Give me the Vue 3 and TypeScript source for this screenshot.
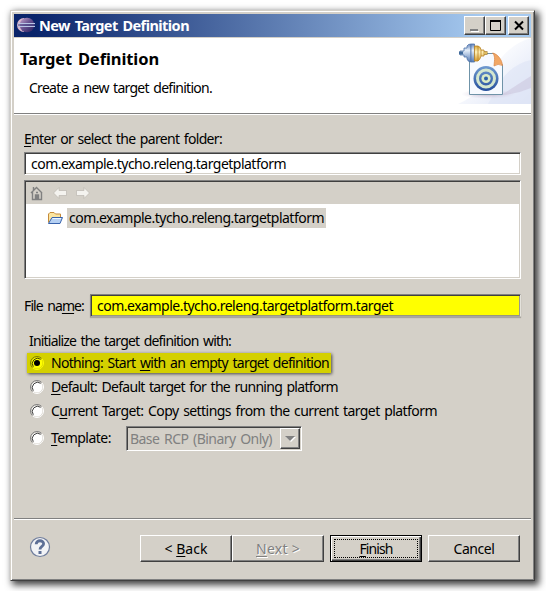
<script setup lang="ts">
import { ref, type Directive } from 'vue'

interface Choice {
  id: string
  before: string
  key: string
  after: string
  width: number
}

// Spreads the letters of a label evenly so that it takes the given width.
const vFit: Directive<HTMLElement, number> = {
  mounted(el, { value }) {
    const count = (el.textContent ?? '').length
    const natural = el.getBoundingClientRect().width
    el.style.letterSpacing = `${(value - natural) / count}px`
  },
}

const selected = ref('nothing')
const folder = 'com.example.tycho.releng.targetplatform'
const fileName = 'com.example.tycho.releng.targetplatform.target'

const choices: Choice[] = [
  { id: 'nothing', before: 'Nothing: Start ', key: 'w', after: 'ith an empty target definition', width: 278 },
  { id: 'default', before: '', key: 'D', after: 'efault: Default target for the running platform', width: 287 },
  { id: 'current', before: 'C', key: 'u', after: 'rrent Target: Copy settings from the current target platform', width: 386 },
  { id: 'template', before: '', key: 'T', after: 'emplate:', width: 60 },
]
</script>

<template>
  <main class="window">
    <header class="titlebar">
      <svg class="logo" width="18" height="16" viewBox="0 0 18 16">
        <defs>
          <linearGradient id="ball" x1="0" y1="0" x2="1" y2="1">
            <stop offset="0" stop-color="#c9a9cf" />
            <stop offset=".45" stop-color="#6b5592" />
            <stop offset="1" stop-color="#241b5c" />
          </linearGradient>
        </defs>
        <path d="M7 1A7 7 0 0 0 7 15" fill="#d9b7cd" />
        <circle cx="10" cy="8" r="7.3" fill="url(#ball)" />
        <path d="M1 6.5H18M1 9.5H18" stroke="#b9c5e5" />
        <path d="M1 8H18" stroke="#4a4c8c" />
      </svg>
      <span class="caption"><span v-fit="150">New Target Definition</span></span>
      <div class="controls">
        <span class="ctl"><svg width="16" height="14"><path d="M4 12.5H12" stroke="#fff" /><path d="M3 11H11" stroke="#808080" stroke-width="2" /></svg></span>
        <span class="ctl"><svg width="16" height="14"><path d="M2.5 1.5H12.5V11.5H2.5Z" fill="none" stroke="#000" /><path d="M2 2H13" stroke="#000" stroke-width="2" /></svg></span>
        <span class="ctl close"><svg width="16" height="14"><path d="M4 2.5L12 10.5M12 2.5L4 10.5" stroke="#000" stroke-width="2" /></svg></span>
      </div>
    </header>

    <section class="banner">
      <div class="words">
        <h1><span v-fit="139">Target Definition</span></h1>
        <p><span v-fit="183">Create a new target definition.</span></p>
      </div>
      <svg class="art" width="75" height="66" viewBox="0 0 75 66">
        <defs>
          <linearGradient id="sky" x1="0" y1="0" x2="1" y2="1">
            <stop offset=".3" stop-color="#fff" />
            <stop offset="1" stop-color="#dce3f6" />
          </linearGradient>
          <linearGradient id="steel" x1="0" y1="0" x2="0" y2="1">
            <stop offset="0" stop-color="#6585bb" />
            <stop offset=".35" stop-color="#e5effa" />
            <stop offset="1" stop-color="#557bb5" />
          </linearGradient>
          <linearGradient id="gold" x1="0" y1="0" x2="0" y2="1">
            <stop offset="0" stop-color="#dda936" />
            <stop offset=".4" stop-color="#fff3bd" />
            <stop offset="1" stop-color="#d79b29" />
          </linearGradient>
          <linearGradient id="rings" x1="0" y1="0" x2="0" y2="1">
            <stop offset="0" stop-color="#6f9ad0" />
            <stop offset="1" stop-color="#254f9c" />
          </linearGradient>
          <radialGradient id="shade">
            <stop offset="0" stop-color="#b6a8bf" stop-opacity=".85" />
            <stop offset="1" stop-color="#d4cbe0" stop-opacity="0" />
          </radialGradient>
        </defs>
        <path d="M75 0V66H2Q25 56 36 34Q50 7 75 0" fill="url(#sky)" />
        <path d="M75 22Q56 26 44 44L32 66H75Z" fill="#dfe5f6" opacity=".65" />
        <path d="M47 56L75 38V50Q61 56 47 57" fill="#c6bdd5" opacity=".45" />
        <ellipse cx="32" cy="56" rx="27" ry="5" fill="url(#shade)" />
        <path d="M13.500 15.500H38L46.500 27V56.500H13.500Z" fill="#f7faff" stroke="#6f93a8" />
        <path d="M36.500 15C40 18 38 25 38 28Q42 25 46.500 27.500C46 22 42 16 36.500 15Z" fill="#f2a765" stroke="#d88443" stroke-width=".7" />
        <circle cx="30" cy="40.500" r="12.500" fill="url(#rings)" />
        <circle cx="30" cy="40.500" r="8.500" fill="none" stroke="#d4e7cf" stroke-width="3" />
        <circle cx="30" cy="40.500" r="4.600" fill="#d9ebc7" />
        <circle cx="30" cy="40.500" r="2" fill="#2d61a9" />
        <path d="M4 13H8V10H11V8Q12 6 15 6V24Q12 24 11 21V19H8V17H4Z" fill="url(#steel)" stroke="#4f73aa" stroke-width=".8" />
        <path d="M15 6H18.500V24H15Z" fill="url(#steel)" stroke="#4f73aa" stroke-width=".8" />
        <path d="M18.500 8H22Q25 9 25 12H28V18H25Q24 22 22 23H18.500Z" fill="url(#gold)" stroke="#b98325" stroke-width=".8" />
        <path d="M22 8V23M25 12V18" stroke="#b98325" stroke-width=".8" />
        <path d="M3 15H7" stroke="#416b9b" stroke-width="3" />
        <path d="M28 15H31.500" stroke="#a67b24" stroke-width="3.500" />
        <path d="M28 15H31" stroke="#f0cf70" stroke-width="1.500" />
      </svg>
    </section>

    <section class="page">
      <label class="parent"><span v-fit="198"><u>E</u>nter or select the parent folder:</span></label>
      <div class="field parent-field"><span v-fit="255">{{ folder }}</span></div>
      <div class="tree">
        <div class="toolbar">
          <svg width="14" height="16" viewBox="0 0 14 16">
            <path d="M1 8L6.500 2.500L12 8M2.500 7V14.500H11.500V7M3.500 5V2M5.500 14V10H8.500V14M6 7.500H8" fill="none" stroke="#808080" stroke-width="1.400" />
            <path d="M7 10V14" stroke="#808080" stroke-width="2" />
          </svg>
          <svg width="14" height="12" viewBox="0 0 14 12"><path d="M.5 6L6 .5V3.500H13.500V8.500H6V11.500Z" fill="#f4f3ef" stroke="#bcb8b0" stroke-width=".7" /></svg>
          <svg width="14" height="12" viewBox="0 0 14 12"><path d="M13.500 6L8 .5V3.500H.5V8.500H8V11.500Z" fill="#f4f3ef" stroke="#bcb8b0" stroke-width=".7" /></svg>
        </div>
        <div class="node">
          <svg width="17" height="14" viewBox="0 0 17 14">
            <path d="M1.500 11.500V3L3 1.500H7L8.500 3H13.500V7" fill="#fbe5a0" stroke="#c58b3b" />
            <path d="M1.500 12.500L5 6.500H15.500L13 12.500Z" fill="#b5d0f3" stroke="#3863ac" />
            <path d="M5.500 7.500H14" stroke="#eff7ff" />
          </svg>
          <span class="picked"><span v-fit="255">{{ folder }}</span></span>
        </div>
      </div>

      <div class="file-row">
        <label><span v-fit="60">File na<u>m</u>e:</span></label>
        <div class="field marked"><span v-fit="296">{{ fileName }}</span></div>
      </div>

      <p class="intro"><span v-fit="202">Initialize the target definition with:</span></p>
      <div class="choices">
        <div
          v-for="choice in choices"
          :key="choice.id"
          class="choice"
          :class="[choice.id, { on: selected === choice.id }]"
          @click="selected = choice.id"
        >
          <svg class="radio" width="14" height="14" viewBox="0 0 14 14">
            <circle class="disc" cx="7" cy="7" r="5.500" />
            <path class="lit" d="M11.600 2.400A6.500 6.500 0 0 1 2.400 11.600" />
            <path class="dim" d="M2.400 11.600A6.500 6.500 0 0 1 11.600 2.400" />
            <path class="dark" d="M3.300 10.700A5.300 5.300 0 0 1 10.700 3.300" />
            <circle v-if="selected === choice.id" cx="7" cy="7" r="3" fill="#000" />
          </svg>
          <span class="choice-text"><span v-fit="choice.width">{{ choice.before }}<u>{{ choice.key }}</u>{{ choice.after }}</span></span>
          <div v-if="choice.id === 'template'" class="combo">
            <span class="combo-text"><span v-fit="142">Base RCP (Binary Only)</span></span>
            <span class="arrow"><svg width="12" height="8"><path d="M2 2H12L7 7Z" fill="#fff" /><path d="M1 1H11L6 6Z" fill="#808080" /></svg></span>
          </div>
        </div>
      </div>
    </section>

    <footer class="footer">
      <svg class="help" width="22" height="22" viewBox="0 0 22 22">
        <circle cx="11" cy="11" r="9.500" fill="#f2f3f6" stroke="#6f7d9c" stroke-width="1.200" />
        <path d="M7.200 8.200C7.200 3.500 14.800 3.700 14.600 8C14.500 10.500 11 10.500 11 13.500" fill="none" stroke="#5d6f96" stroke-width="2.800" />
        <path d="M9.500 15H12.500V18H9.500Z" fill="#5d6f96" />
      </svg>
      <button class="btn"><span v-fit="43">&lt; <u>B</u>ack</span></button>
      <button class="btn off"><span v-fit="44"><u>N</u>ext &gt;</span></button>
      <button class="btn primary"><span class="focus"><span v-fit="33"><u>F</u>inish</span></span></button>
      <button class="btn cancel"><span v-fit="41">Cancel</span></button>
    </footer>
  </main>
</template>

<style>
body {
  margin: 0;
  background: #fff;
}
</style>

<style scoped>
* {
  box-sizing: border-box;
}
.window {
  display: flex;
  flex-direction: column;
  width: 525px;
  height: 571px;
  margin: 10px;
  padding: 3px;
  border: 1px solid #404040;
  border-top-color: #d4d0c8;
  border-left-color: #d4d0c8;
  background: #d4d0c8;
  box-shadow: inset 1px 1px #fff, inset -1px -1px #808080, 3px 3px 7px 1px rgba(0, 0, 0, 0.75);
  font: 14px/20px 'Noto Sans', 'Open Sans', sans-serif;
  word-spacing: 1.5px;
  color: #000;
  white-space: nowrap;
}
svg {
  display: block;
  flex: none;
}
u {
  text-decoration-thickness: 1px;
  text-underline-offset: 2px;
  text-decoration-skip-ink: none;
}
.titlebar {
  display: flex;
  flex: none;
  align-items: center;
  width: 517px;
  height: 23px;
  padding: 0 2px 0 3px;
  background: linear-gradient(90deg, #0a246a 4%, #a6caf0 91%);
}
.logo {
  margin-bottom: 2px;
}
.caption {
  margin: -2px 0 0 4px;
  color: #fff;
  font-size: 14.5px;
  font-weight: 700;
}
.controls {
  display: flex;
  margin-left: auto;
}
.ctl {
  width: 21px;
  height: 19px;
  padding: 2px;
  background: #d4d0c8;
  border: 1px solid #404040;
  border-top-color: #fff;
  border-left-color: #fff;
  box-shadow: inset -1px -1px #808080;
}
.close {
  margin-left: 2px;
}
.banner {
  display: flex;
  flex: none;
  justify-content: space-between;
  width: 517px;
  height: 77px;
  border-top: 1px solid #d4d0c8;
  border-bottom: 1px solid #808080;
  background: #fff;
}
.words {
  padding: 11px 0 0 6px;
}
h1 {
  margin: 0;
  font-size: 16.5px;
  line-height: 20px;
}
p {
  margin: 0;
}
.words p {
  padding: 9px 0 0 9px;
}
.page {
  display: flex;
  flex-direction: column;
  flex: none;
  width: 517px;
  height: 404px;
  padding: 14px 10px 0;
  border-top: 1px solid #fff;
}
.parent {
  height: 23px;
}
.field {
  height: 23px;
  padding: 0 5px;
  border: 1px solid #fff;
  border-top-color: #808080;
  border-left-color: #808080;
  box-shadow: inset 1px 1px #404040, inset -1px -1px #d4d0c8;
  background: #fff;
  line-height: 21px;
}
.parent-field {
  flex: none;
  padding-left: 6px;
}
.tree {
  flex: none;
  height: 99px;
  margin-top: 5px;
  padding: 1px;
  border: 1px solid #fff;
  border-top-color: #808080;
  border-left-color: #808080;
  box-shadow: inset 1px 1px #404040, inset -1px -1px #d4d0c8;
  background: #fff;
}
.toolbar {
  display: flex;
  align-items: center;
  gap: 9px;
  height: 22px;
  padding-left: 4px;
  background: #d4d0c8;
}
.node {
  display: flex;
  align-items: center;
  gap: 3px;
  margin: 4px 0 0 21px;
}
.picked {
  width: 259px;
  height: 20px;
  padding-left: 2px;
  background: #d4d0c8;
}
.file-row {
  display: flex;
  align-items: center;
  flex: none;
  margin-top: 15px;
}
.file-row label {
  width: 66px;
}
.marked {
  flex: 1;
  padding-left: 6px;
  background: #ff0;
  box-shadow: inset 1px 1px #404040, inset -1px 0 #99978f, inset 0 -1px #99977f, 0 1px 1px rgba(0, 0, 0, 0.2);
  border-right-color: #e4e2dc;
  border-bottom-color: #aaa8a0;
}
.intro {
  margin: 14px 0 0 5px;
}
.choices {
  display: flex;
  flex-direction: column;
  margin-left: 3px;
}
.choice {
  display: flex;
  align-items: center;
  align-self: flex-start;
  flex: none;
  height: 20px;
  margin: 2px 0;
  padding-left: 3px;
}
.nothing {
  width: 304px;
}
.on {
  background: #d4d000;
  box-shadow: 1px 1px 3px rgba(0, 0, 0, 0.65);
}
.choice-text {
  width: 60px;
  margin-left: 7px;
}
.template {
  height: 25px;
  margin-top: 3px;
}
.template .radio,
.template .choice-text {
  margin-bottom: 2px;
}
.disc {
  fill: #fff;
}
.lit,
.dim,
.dark {
  fill: none;
  stroke: #fff;
}
.dim {
  stroke: #808080;
}
.dark {
  stroke: #404040;
}
.on .disc {
  fill: #ff0;
}
.on .lit {
  stroke: #ff0;
}
.on .dim {
  stroke: #808000;
}
.on .dark {
  stroke: #404000;
}
.combo {
  display: flex;
  align-items: center;
  justify-content: space-between;
  width: 176px;
  height: 25px;
  margin-left: 15px;
  padding: 1px 1px 1px 3px;
  border: 1px solid #fff;
  border-top-color: #808080;
  border-left-color: #808080;
  box-shadow: inset 1px 1px #404040, inset -1px -1px #d4d0c8;
  color: #808080;
}
.arrow {
  display: flex;
  align-items: center;
  justify-content: center;
  width: 20px;
  height: 21px;
  border: 1px solid #404040;
  border-top-color: #fff;
  border-left-color: #fff;
  box-shadow: inset -1px -1px #808080;
}
.footer {
  display: flex;
  flex: none;
  width: 517px;
  height: 59px;
  padding: 15px 10px 0 15px;
  border-top: 1px solid #808080;
  box-shadow: inset 0 1px #fff;
}
.help {
  margin: 2px 89px 0 0;
}
.btn {
  display: flex;
  align-items: center;
  justify-content: center;
  flex: none;
  width: 92px;
  height: 27px;
  padding: 0;
  margin: 1px 0 0;
  border: 1px solid #404040;
  border-top-color: #fff;
  border-left-color: #fff;
  border-radius: 0;
  box-shadow: inset -1px -1px #808080;
  background: #d4d0c8;
  color: #000;
  font: inherit;
}
.off {
  color: #808080;
  text-shadow: 1px 1px #fff;
}
.primary {
  margin-left: 6px;
  padding: 3px;
  border-color: #000;
  box-shadow: inset 1px 1px #fff, inset -1px -1px #404040, inset -2px -2px #808080;
}
.focus {
  display: flex;
  align-items: center;
  justify-content: center;
  width: 84px;
  height: 19px;
  border: 1px dotted #000;
}
.cancel {
  margin-left: 6px;
}
</style>
